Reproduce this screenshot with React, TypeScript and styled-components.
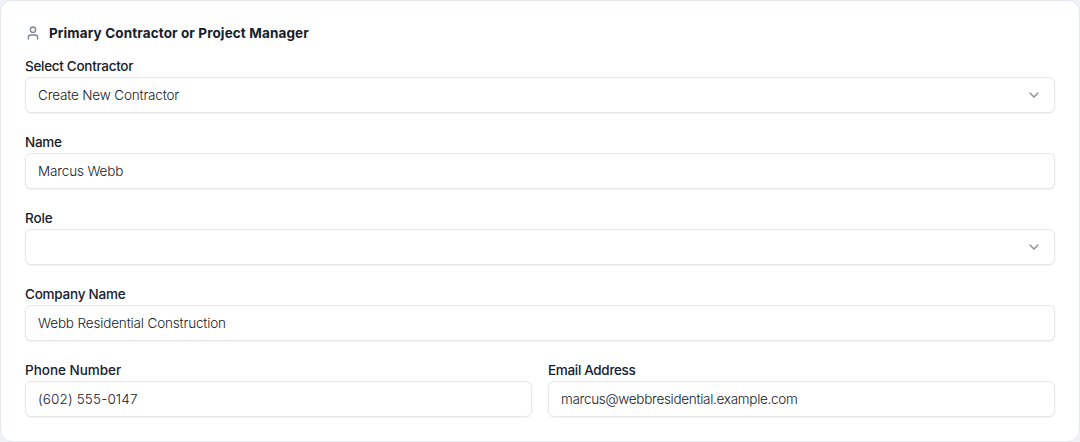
import React, { useState } from 'react';
import styled, { createGlobalStyle, css } from 'styled-components';
import { ChevronDown, User } from 'lucide-react';

const GlobalStyle = createGlobalStyle`
  *, *::before, *::after {
    box-sizing: border-box;
  }

  body {
    margin: 0;
    background: #eef1f7;
    color: #16202c;
    font-family: Inter, 'Liberation Sans', sans-serif;
  }
`;

const Card = styled.section`
  height: 442px;
  padding: 23px 24px 24px;
  background: #ffffff;
  border: 1px solid #e4e7eb;
  border-radius: 12px;
`;

const CardHeader = styled.header`
  display: flex;
  align-items: center;
  gap: 8px;
  height: 18px;
  margin-bottom: 14px;

  svg {
    color: #7b8794;
  }
`;

const Title = styled.h3`
  margin: 0;
  font-size: 13.5px;
  line-height: 18px;
  font-weight: 650;
  letter-spacing: 0.12px;
`;

const Form = styled.form`
  display: grid;
  grid-template-columns: 1fr 1fr;
  gap: 19px 16px;
`;

const Field = styled.div<{ $half?: boolean }>`
  grid-column: ${props => (props.$half ? 'auto' : '1 / -1')};
`;

const Label = styled.label<{ $spacing: string }>`
  display: block;
  height: 21px;
  font-size: 13.5px;
  line-height: 20px;
  font-weight: 500;
  letter-spacing: ${props => props.$spacing};
`;

const control = css<{ $spacing: string }>`
  display: flex;
  align-items: center;
  width: 100%;
  height: 36px;
  padding: 0 12px;
  background: #ffffff;
  border: 1px solid #e5e7eb;
  border-radius: 6px;
  box-shadow: 0 1px 2px rgba(0, 0, 0, 0.05);
  color: #16202c;
  font-family: inherit;
  font-size: 13.5px;
  font-weight: 350;
  letter-spacing: ${props => props.$spacing};
`;

const Input = styled.input`
  ${control}
`;

const SelectButton = styled.button`
  ${control}
  justify-content: space-between;

  svg {
    color: #8b8b8d;
  }
`;

interface FieldData {
  id: string;
  label: string;
  value: string;
  labelSpacing: string;
  valueSpacing: string;
  select?: boolean;
  half?: boolean;
}

const fields: FieldData[] = [
  { id: 'contractor', label: 'Select Contractor', value: 'Create New Contractor', labelSpacing: '-0.3px', valueSpacing: '-0.16px', select: true },
  { id: 'name', label: 'Name', value: 'Marcus Webb', labelSpacing: '-0.3px', valueSpacing: '-0.15px' },
  { id: 'role', label: 'Role', value: '', labelSpacing: '-0.15px', valueSpacing: '0', select: true },
  { id: 'company', label: 'Company Name', value: 'Webb Residential Construction', labelSpacing: '-0.23px', valueSpacing: '-0.15px' },
  { id: 'phone', label: 'Phone Number', value: '(602) 555-0147', labelSpacing: '-0.02px', valueSpacing: '0.13px', half: true },
  { id: 'email', label: 'Email Address', value: 'marcus@webbresidential.example.com', labelSpacing: '-0.33px', valueSpacing: '-0.29px', half: true },
];

const FormField: React.FC<{ field: FieldData }> = ({ field }) => {
  const [value, setValue] = useState(field.value);

  return (
    <Field $half={field.half}>
      <Label htmlFor={field.id} $spacing={field.labelSpacing}>{field.label}</Label>
      {field.select ? (
        <SelectButton id={field.id} type="button" $spacing={field.valueSpacing}>
          <span>{value}</span>
          <ChevronDown size={16} />
        </SelectButton>
      ) : (
        <Input
          id={field.id}
          value={value}
          onChange={event => setValue(event.target.value)}
          $spacing={field.valueSpacing}
        />
      )}
    </Field>
  );
};

const App: React.FC = () => (
  <>
    <GlobalStyle />
    <Card>
      <CardHeader>
        <User size={16} />
        <Title>Primary Contractor or Project Manager</Title>
      </CardHeader>
      <Form>
        {fields.map(field => (
          <FormField key={field.id} field={field} />
        ))}
      </Form>
    </Card>
  </>
);

export default App;
